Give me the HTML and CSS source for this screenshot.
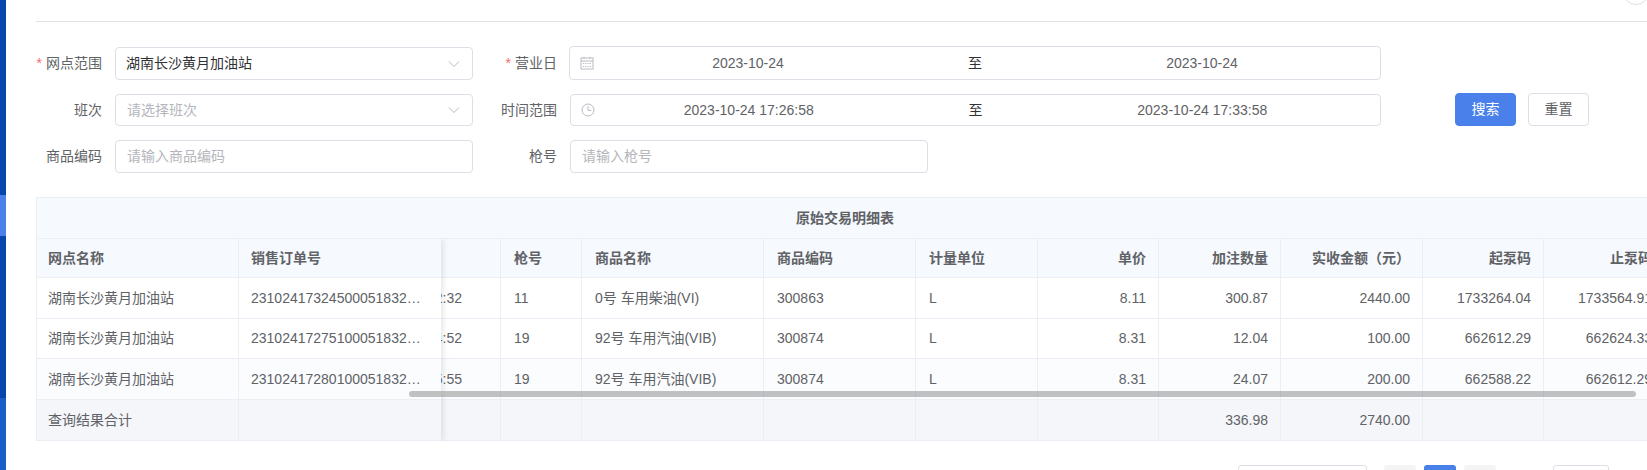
FILE: index.html
```html
<!DOCTYPE html>
<html lang="zh-CN">
<head>
<meta charset="utf-8">
<title>原始交易明细表</title>
<link rel="stylesheet" href="styles.css">
</head>
<body>
<div class="shell">
  <aside class="rail">
    <div class="seg seg-dark-top"></div>
    <div class="seg seg-active"></div>
    <div class="seg seg-dark-mid"></div>
    <div class="seg seg-light"></div>
  </aside>
  <main class="main">
    <div class="topbar"><span class="top-circle"></span></div>
    <form class="filters">
      <label class="lab"><i class="req">*</i>网点范围</label>
      <div class="field select"><span class="val">湖南长沙黄月加油站</span>
        <svg class="chev" viewBox="0 0 12 8"><path d="M1 1.5 6 6.5 11 1.5" fill="none" stroke="#b8bac0" stroke-width="1"/></svg></div>
      <label class="lab"><i class="req">*</i>营业日</label>
      <div class="field range nudge">
        <svg class="ico" viewBox="0 0 14 14"><g fill="none" stroke="#b9bbc1" stroke-width="1"><rect x="1" y="2" width="12" height="11"/><path d="M1 5h12M4 .8v2M10 .8v2"/><path d="M3 7.5h8M3 10.5h8" stroke-dasharray="1.2 1"/></g></svg>
        <span class="r-val">2023-10-24</span><span class="r-sep">至</span><span class="r-val">2023-10-24</span>
      </div>
      <div class="spacer"></div>

      <label class="lab">班次</label>
      <div class="field select"><span class="ph">请选择班次</span>
        <svg class="chev" viewBox="0 0 12 8"><path d="M1 1.5 6 6.5 11 1.5" fill="none" stroke="#b8bac0" stroke-width="1"/></svg></div>
      <label class="lab">时间范围</label>
      <div class="field range">
        <svg class="ico" viewBox="0 0 14 14"><g fill="none" stroke="#b9bbc1" stroke-width="1"><circle cx="7" cy="7" r="6"/><path d="M7 3.2V7.4h3.4"/></g></svg>
        <span class="r-val">2023-10-24 17:26:58</span><span class="r-sep">至</span><span class="r-val">2023-10-24 17:33:58</span>
      </div>
      <div class="actions">
        <button type="button" class="btn primary">搜索</button>
        <button type="button" class="btn">重置</button>
      </div>

      <label class="lab">商品编码</label>
      <div class="field"><span class="ph">请输入商品编码</span></div>
      <label class="lab">枪号</label>
      <div class="field short"><span class="ph">请输入枪号</span></div>
      <div class="spacer"></div>
    </form>

    <section class="data">
      <div class="data-title">原始交易明细表</div>
      <div class="data-body">
        <div class="pane-fixed">
          <table class="grid">
            <thead><tr class="r-head"><th class="w-fixed">网点名称</th><th class="w-fixed">销售订单号</th></tr></thead>
            <tbody>
              <tr class="r-tall"><td>湖南长沙黄月加油站</td><td class="order">2310241732450005183200176</td></tr>
              <tr class="r-mid"><td>湖南长沙黄月加油站</td><td class="order">2310241727510005183200175</td></tr>
              <tr class="r-tall stripe"><td>湖南长沙黄月加油站</td><td class="order">2310241728010005183200174</td></tr>
              <tr class="r-tall total"><td>查询结果合计</td><td></td></tr>
            </tbody>
          </table>
        </div>
        <div class="pane-scroll">
          <table class="grid wide">
            <thead><tr class="r-head">
              <th class="w-time"></th><th class="w-gun">枪号</th><th class="w-name">商品名称</th><th class="w-code">商品编码</th><th class="w-unit">计量单位</th>
              <th class="w-price num">单价</th><th class="w-qty num">加注数量</th><th class="w-amt num">实收金额（元）</th><th class="w-pump num">起泵码</th><th class="w-pump num">止泵码</th>
            </tr></thead>
            <tbody>
              <tr class="r-tall"><td class="time"><div class="clip">2023-10-24 17:32:32</div></td><td>11</td><td>0号 车用柴油(VI)</td><td>300863</td><td>L</td><td class="num">8.11</td><td class="num">300.87</td><td class="num">2440.00</td><td class="num">1733264.04</td><td class="num">1733564.91</td></tr>
              <tr class="r-mid"><td class="time"><div class="clip">2023-10-24 17:24:52</div></td><td>19</td><td>92号 车用汽油(VIB)</td><td>300874</td><td>L</td><td class="num">8.31</td><td class="num">12.04</td><td class="num">100.00</td><td class="num">662612.29</td><td class="num">662624.33</td></tr>
              <tr class="r-tall stripe"><td class="time"><div class="clip">2023-10-24 17:25:55</div></td><td>19</td><td>92号 车用汽油(VIB)</td><td>300874</td><td>L</td><td class="num">8.31</td><td class="num">24.07</td><td class="num">200.00</td><td class="num">662588.22</td><td class="num">662612.29</td></tr>
              <tr class="r-tall total"><td></td><td></td><td></td><td></td><td></td><td></td><td class="num">336.98</td><td class="num">2740.00</td><td></td><td></td></tr>
            </tbody>
          </table>
        </div>
        <div class="hbar"></div>
      </div>
    </section>

    <nav class="pager">
      <div class="pg-size"></div>
      <div class="pg-btn"></div>
      <div class="pg-btn on"></div>
      <div class="pg-btn"></div>
      <div class="pg-jump"></div>
    </nav>
  </main>
</div>
</body>
</html>
```
FILE: styles.css
```css
* { box-sizing: border-box; }
html, body { margin: 0; padding: 0; background: #fff; }
body {
  width: 1647px; height: 470px; overflow: hidden;
  font: 14px/1.2 "Liberation Sans", "Noto Sans CJK SC", sans-serif;
  color: #606266;
}
.shell { display: flex; height: 470px; overflow: hidden; }
.rail { flex: none; width: 6px; display: flex; flex-direction: column; }
.seg-dark-top { height: 195px; background: #0747ad; }
.seg-active { height: 41px; background: #4a80ea; }
.seg-dark-mid { height: 162px; background: #0747ad; }
.seg-light { height: 72px; background: #1a5fc8; }

.main { flex: none; width: 1617px; margin-left: 30px; }
.topbar { position: relative; height: 22px; border-bottom: 1px solid #e1e2e8; }
.top-circle {
  position: absolute; right: 3px; top: -23px;
  width: 28px; height: 28px; border-radius: 50%;
  border: 1px solid #dfe0e6;
}

.filters {
  display: grid;
  grid-template-columns: 79px 358px 97px 811px auto;
  grid-template-rows: 33px 32px 33px;
  row-gap: 14px;
  padding-top: 25px;
}
.lab {
  display: flex; align-items: center; justify-content: flex-end;
  padding-right: 13px; white-space: nowrap; color: #606266;
}
.req { font-style: normal; color: #f56c6c; margin-right: 4px; }
.field {
  display: flex; align-items: center;
  border: 1px solid #dcdfe6; border-radius: 4px;
  padding-left: 11px; background: #fff;
}
.select { justify-content: space-between; padding-right: 12px; }
.val { color: #303133; margin-left: -1px; }
.ph { color: #b4b6bc; }
.chev { width: 12px; height: 8px; flex: none; }
.short { width: 358px; }
.range { padding-left: 10px; padding-right: 24px; color: #606266; }
.nudge { margin: -1px 0 0 -1px; }
.ico { width: 14px; height: 14px; flex: none; }
.r-val { flex: 1; text-align: center; }
.r-sep { flex: none; width: 146px; text-align: center; color: #303133; }
.actions { display: flex; gap: 12px; padding-left: 74px; margin-top: -1px; }
.btn {
  width: 61px; height: 33px; padding: 0;
  border: 1px solid #dcdfe6; border-radius: 4px;
  background: #fff; color: #606266; font: inherit;
}
.btn.primary { background: #4a80ea; border-color: #4a80ea; color: #fff; }

.data {
  margin-top: 24px;
  border-top: 1px solid #ebeef5;
  border-left: 1px solid #ebeef5;
}
.data-title {
  height: 41px; display: flex; align-items: center; justify-content: center;
  background: #f6f9fe; border-bottom: 1px solid #ebeef5;
  font-weight: 700;
}
.data-body { position: relative; display: flex; }
.pane-fixed {
  flex: none; width: 404px; position: relative; z-index: 1;
  background: #fff; box-shadow: 2px 0 6px rgba(0, 0, 0, .1);
  clip-path: inset(0 -10px 0 0);
}
.pane-fixed td:last-child, .pane-fixed th:last-child { border-right-color: transparent; }
.pane-fixed td:first-child, .pane-fixed th:first-child { padding-left: 11px; }
.pane-scroll { flex: 1; min-width: 0; overflow: hidden; }
.grid { border-collapse: separate; border-spacing: 0; table-layout: fixed; width: 404px; }
.grid.wide { width: 1224px; }
.grid th, .grid td {
  padding: 0 12px; text-align: left; white-space: nowrap;
  overflow: hidden; text-overflow: ellipsis;
  border-right: 1px solid #ebeef5; border-bottom: 1px solid #ebeef5;
}
.wide th, .wide td { padding-left: 13px; }
.grid th { background: #f6f9fe; font-weight: 700; }
.grid .num { text-align: right; }
.grid .order { padding-right: 18px; }
.grid .time { padding: 0 38px 0 0; }
.clip { display: flex; justify-content: flex-end; white-space: nowrap; }
.r-head { height: 39px; }
.r-tall { height: 41px; }
.r-mid { height: 40px; }
.stripe td { background: #fbfcfe; }
.total td { background: #f5f6fa; }
.w-fixed { width: 202px; }
.w-time { width: 60px; }
.w-gun { width: 81px; }
.w-name { width: 182px; }
.w-code { width: 152px; }
.w-unit { width: 122px; }
.w-price { width: 121px; }
.w-qty { width: 122px; }
.w-amt { width: 142px; }
.w-pump { width: 121px; }
.hbar {
  position: absolute; z-index: 2;
  left: 372px; width: 1227px; top: 152px; height: 6px;
  border-radius: 3px; background: rgba(150, 150, 150, .58);
}

.pager { display: flex; margin: 24px 0 0 1202px; }
.pg-size, .pg-jump, .pg-btn { height: 32px; border-radius: 3px; flex: none; }
.pg-size { width: 129px; border: 1px solid #dcdfe6; margin-right: 17px; }
.pg-btn { width: 32px; background: #f4f4f5; margin-right: 8px; }
.pg-btn.on { background: #4a80ea; }
.pg-jump { width: 56px; border: 1px solid #dcdfe6; margin-left: 49px; }
```
